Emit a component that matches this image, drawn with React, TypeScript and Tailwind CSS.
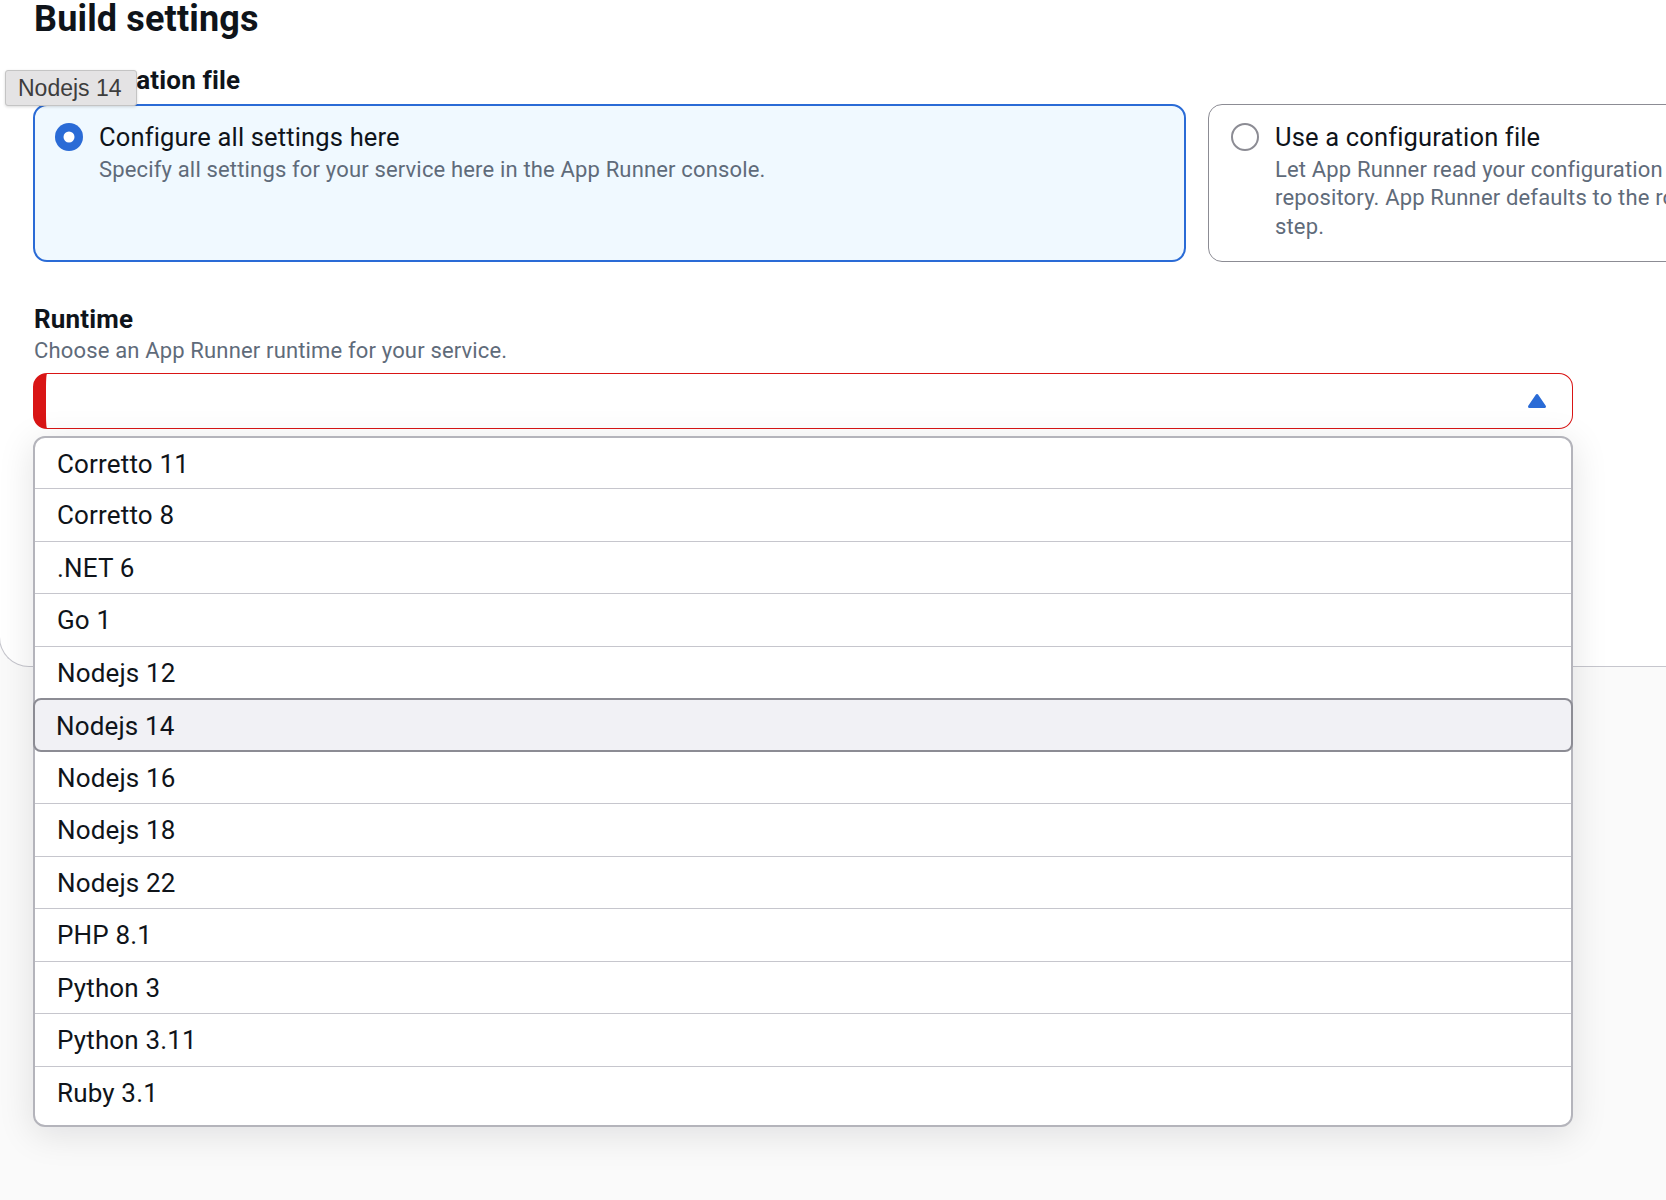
const runtimes = [
  "Corretto 11",
  "Corretto 8",
  ".NET 6",
  "Go 1",
  "Nodejs 12",
  "Nodejs 14",
  "Nodejs 16",
  "Nodejs 18",
  "Nodejs 22",
  "PHP 8.1",
  "Python 3",
  "Python 3.11",
  "Ruby 3.1",
];

const SELECTED = 5;

function Radio({ checked }: { checked: boolean }) {
  return (
    <svg width="28" height="28" viewBox="0 0 28 28" className="shrink-0">
      {checked ? (
        <>
          <circle cx="14" cy="14" r="14" fill="#2a6bd6" />
          <circle cx="14" cy="14" r="5.5" fill="#ffffff" />
        </>
      ) : (
        <circle cx="14" cy="14" r="13" fill="#ffffff" stroke="#8c8c94" strokeWidth="2" />
      )}
    </svg>
  );
}

function OptionRow({ label, index }: { label: string; index: number }) {
  if (index === SELECTED) {
    return (
      <div className="relative z-10 -mx-[2px] flex h-[54px] items-center rounded-[8px] border-2 border-[#8c8c94] bg-[#f1f1f5] pl-[21px] pt-[2px] text-[26px] text-[#0f141a]">
        {label}
      </div>
    );
  }
  if (index === 0) {
    return <div className="flex h-[50px] items-center pl-[22px] pt-[3px] text-[26px] text-[#0f141a]">{label}</div>;
  }
  if (index === SELECTED + 1) {
    return <div className="flex h-[51px] items-center pl-[22px] pt-[2px] text-[26px] text-[#0f141a]">{label}</div>;
  }
  return (
    <div className="flex h-[52.5px] items-center border-t border-[#c6c6cd] pl-[22px] pt-[2px] text-[26px] text-[#0f141a]">
      {label}
    </div>
  );
}

export default function App() {
  return (
    <div className="min-h-[1200px] w-full overflow-hidden bg-[#fafafa] font-['Roboto',sans-serif] tracking-[0.01em]">
      <div className="relative -ml-px h-[668px] rounded-bl-[30px] border-b border-l border-[#c6c6cd] bg-white">
        <div className="pl-[34px]">
          <h2 className="-mt-px text-[36px] font-bold leading-[40px] text-[#0f141a]">Build settings</h2>
          <div className="mt-[23.5px] text-[26px] font-bold leading-[35px] text-[#0f141a]">Configuration file</div>

          <div className="-ml-px mt-[6.5px] grid w-[2328px] grid-cols-2 gap-[22px]">
            <div className="h-[158px] rounded-[14px] border-2 border-[#2a6bd6] bg-[#f0f9ff] pl-[20px] pt-[13.5px]">
              <div className="flex items-center gap-[16px]">
                <Radio checked />
                <span className="text-[25.5px] leading-[35px] text-[#0f141a]">Configure all settings here</span>
              </div>
              <div className="mt-px pl-[44px] text-[22px] leading-[28.5px] text-[#5f6b7a]">
                Specify all settings for your service here in the App Runner console.
              </div>
            </div>
            <div className="h-[158px] rounded-[14px] border border-[#8c8c94] bg-white pl-[22px] pt-[14.5px]">
              <div className="flex items-center gap-[16px]">
                <Radio checked={false} />
                <span className="text-[25.5px] leading-[35px] text-[#0f141a]">Use a configuration file</span>
              </div>
              <div className="mt-px pl-[44px] text-[22px] leading-[28.5px] text-[#5f6b7a]">
                <span className="block whitespace-nowrap">
                  Let App Runner read your configuration from the apprunner.yaml file in your source
                </span>
                <span className="block whitespace-nowrap">
                  repository. App Runner defaults to the root directory specified in the previous
                </span>
                <span className="block whitespace-nowrap">step.</span>
              </div>
            </div>
          </div>

          <div className="mt-[39.5px] text-[26px] font-bold leading-[35px] text-[#0f141a]">Runtime</div>
          <div className="mt-[0.5px] text-[22px] leading-[28px] text-[#5f6b7a]">
            Choose an App Runner runtime for your service.
          </div>

          <div className="relative -ml-px mt-[8px] w-[1540px]">
            <div className="flex h-[56px] items-center justify-end rounded-[14px] border border-l-[13px] border-[#d91515] bg-white pr-[25px]">
              <svg width="20" height="16" viewBox="0 0 20 16">
                <path
                  d="M2.5 13.5 L10 2.5 L17.5 13.5 Z"
                  fill="#2a6bd6"
                  stroke="#2a6bd6"
                  strokeWidth="3"
                  strokeLinejoin="round"
                />
              </svg>
            </div>

            <div className="absolute left-0 right-0 top-[63px] z-20 rounded-[12px] border-2 border-[#b4b4bb] bg-white pb-[7px] shadow-[0_7px_35px_2px_rgba(0,7,22,0.1)]">
              {runtimes.map((r, i) => (
                <OptionRow key={r} label={r} index={i} />
              ))}
            </div>
          </div>
        </div>

        <div className="absolute left-[5px] top-[71px] z-30 flex h-[36px] w-[132px] items-center rounded-[3px] border border-[#c4c4c4] bg-[#e4e3e4] pl-[12px] font-['Liberation_Sans',sans-serif] text-[23px] tracking-normal text-[#3d3d3d] shadow-[0_1px_3px_rgba(0,0,0,0.15)]">
          Nodejs 14
        </div>
      </div>
    </div>
  );
}
